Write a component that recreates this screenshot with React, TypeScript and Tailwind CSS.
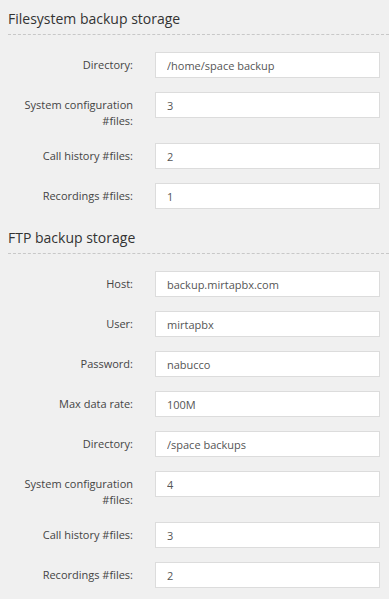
import React from 'react';

type Field = { label: string; value: string };

const filesystem: Field[] = [
  { label: 'Directory:', value: '/home/space backup' },
  { label: 'System configuration #files:', value: '3' },
  { label: 'Call history #files:', value: '2' },
  { label: 'Recordings #files:', value: '1' },
];

const ftp: Field[] = [
  { label: 'Host:', value: 'backup.mirtapbx.com' },
  { label: 'User:', value: 'mirtapbx' },
  { label: 'Password:', value: 'nabucco' },
  { label: 'Max data rate:', value: '100M' },
  { label: 'Directory:', value: '/space backups' },
  { label: 'System configuration #files:', value: '4' },
  { label: 'Call history #files:', value: '3' },
  { label: 'Recordings #files:', value: '2' },
];

function Section({ title, fields }: { title: string; fields: Field[] }) {
  return (
    <div>
      <h2 className="pt-[4px] pb-[4px] text-[14px] leading-[22px] text-[#333] border-b border-dashed border-[#c8c8c8]">
        {title}
      </h2>
      <div className="mt-[17px]">
        {fields.map((f, i) => (
          <div key={i} className="flex items-start gap-[22px] mb-[14px]">
            <label className="w-[125px] shrink-0 text-right text-[11px] leading-[16px] pt-[5px] text-[#444]">
              {f.label}
            </label>
            <input
              type="text"
              defaultValue={f.value}
              className="w-[225px] h-[26px] bg-white border border-[#dcdcdc] px-[11px] text-[11px] text-[#555] outline-none"
            />
          </div>
        ))}
      </div>
    </div>
  );
}

export default function App() {
  return (
    <div
      className="min-h-[599px] w-[389px] bg-[#f0f0f0] pl-[8px] pt-[4px]"
      style={{ fontFamily: '"Open Sans", sans-serif' }}
    >
      <Section title="Filesystem backup storage" fields={filesystem} />
      <Section title="FTP backup storage" fields={ftp} />
    </div>
  );
}
